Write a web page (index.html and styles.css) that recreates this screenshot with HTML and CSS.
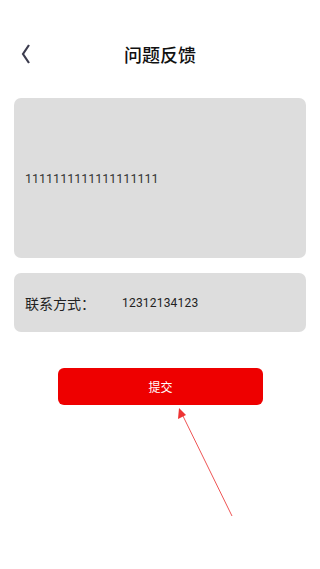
FILE: index.html
```html
<!DOCTYPE html>
<html lang="zh">
<head>
    <meta charset="UTF-8">
    <meta name="viewport" content="width=device-width, initial-scale=1.0">
    <title>问题反馈</title>
    <link rel="stylesheet" href="styles.css">
</head>
<body>
    <div class="page">
        <div class="header">
            <span class="back">
                <svg width="10" height="20" viewBox="0 0 10 20">
                    <path d="M8 1 L2 10 L8 19" fill="none" stroke="#3d3d4f" stroke-width="2.2"/>
                </svg>
            </span>
            <h1 class="title">问题反馈</h1>
        </div>

        <div class="content-box">1111111111111111111</div>

        <div class="contact-box">
            <span class="contact-label">联系方式：</span>
            <span class="contact-value">12312134123</span>
        </div>

        <div class="submit-wrap">
            <button class="submit">提交</button>
        </div>

        <svg class="pointer" width="320" height="569" viewBox="0 0 320 569">
            <line x1="232" y1="516" x2="182" y2="414" stroke="#ee5555" stroke-width="1"/>
            <polygon points="179,408 178,419 186,415" fill="#e33"/>
        </svg>
    </div>
</body>
</html>
```

FILE: styles.css
```css
body {
    margin: 0;
    padding: 0;
    background: #fff;
    font-family: Roboto, "Noto Sans CJK SC", sans-serif;
    color: #222;
}

.page {
    position: relative;
    width: 320px;
    height: 569px;
    overflow: hidden;
}

.header {
    position: relative;
    height: 54px;
    margin-top: 27px;
    display: flex;
    align-items: center;
    justify-content: center;
}

.back {
    position: absolute;
    left: 21px;
    top: 17px;
    line-height: 0;
}

.title {
    margin: 0;
    font-size: 18px;
    font-weight: 500;
    color: #111;
}

.content-box {
    margin: 17px 14px 0;
    height: 160px;
    background: #dddddd;
    border-radius: 7px;
    display: flex;
    align-items: center;
    padding: 0 11px;
    font-size: 12.5px;
    color: #333;
}

.contact-box {
    margin: 15px 14px 0;
    height: 59px;
    background: #dddddd;
    border-radius: 7px;
    display: flex;
    align-items: center;
    padding: 0 11px;
}

.contact-label {
    width: 97px;
    font-size: 14px;
    color: #222;
}

.contact-value {
    font-size: 12px;
    letter-spacing: 0.2px;
    color: #222;
}

.submit-wrap {
    margin-top: 36px;
    display: flex;
    justify-content: center;
}

.submit {
    width: 205px;
    height: 37px;
    margin-left: 1px;
    border: none;
    border-radius: 6px;
    background: #ee0000;
    color: #fff;
    font-family: inherit;
    font-size: 12px;
}

.pointer {
    position: absolute;
    left: 0;
    top: 0;
}
```
